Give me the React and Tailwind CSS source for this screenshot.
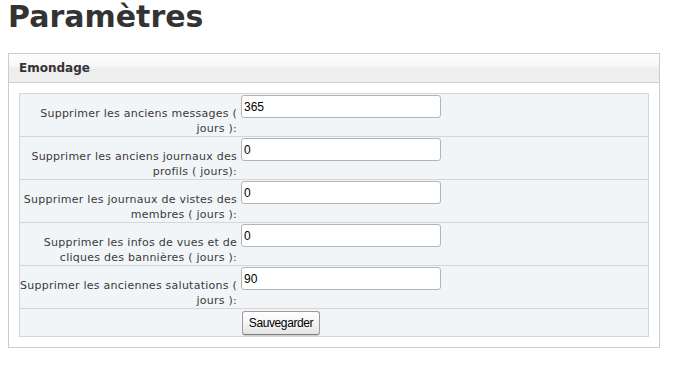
import React from 'react';

// Settings rows: label lines are broken where the original page wraps them
const rows = [
  { lines: ['Supprimer les anciens messages (', 'jours ):'], value: '365' },
  { lines: ['Supprimer les anciens journaux des', 'profils ( jours):'], value: '0' },
  { lines: ['Supprimer les journaux de vistes des', 'membres ( jours ):'], value: '0' },
  { lines: ['Supprimer les infos de vues et de', 'cliques des bannières ( jours ):'], value: '0' },
  { lines: ['Supprimer les anciennes salutations (', 'jours ):'], value: '90' },
];

const SettingRow = ({ lines, value }) => (
  <div className="grid grid-cols-[219px_1fr] border-t border-[#d6d6d6] first:border-t-0">
    <div className="pt-[12px] pr-[2px] text-right text-[11px] leading-[15px] tracking-[0.25px] text-[#3a3a3a] whitespace-nowrap">
      {lines[0]}
      <br />
      {lines[1]}
    </div>
    <div className="pt-[1px] pl-[2px]">
      <input
        type="text"
        defaultValue={value}
        className="block w-[200px] h-[23px] px-[2px] bg-white border border-[#b4b4b4] rounded-[3px] text-[12px] text-black outline-none"
        style={{ fontFamily: '"Liberation Sans", Arial, sans-serif' }}
      />
    </div>
  </div>
);

export default function App() {
  return (
    <div
      className="min-h-[370px] bg-white text-[#333333]"
      style={{ fontFamily: '"DejaVu Sans", Verdana, sans-serif' }}
    >
      <h1 className="pl-[8px] text-[30px] leading-[34px] font-bold text-[#333333]">Paramètres</h1>

      <div className="ml-[8px] mt-[19px] w-[652px] border border-[#cccccc]">
        {/* Panel header */}
        <div className="h-[29px] border-b border-[#cccccc] bg-[linear-gradient(to_bottom,#fdfdfd_0%,#f8f8f8_40%,#ededed_55%,#efefef_100%)] pl-[10px] text-[12px] leading-[28px] font-bold text-[#333333]">
          Emondage
        </div>

        {/* Panel body */}
        <div className="p-[10px]">
          <div className="border border-[#d6d6d6] bg-[#f2f5f8]">
            {rows.map((row, i) => (
              <SettingRow key={i} lines={row.lines} value={row.value} />
            ))}
            <div className="grid grid-cols-[219px_1fr] border-t border-[#d6d6d6]">
              <div />
              <div className="pt-[2px] pb-[1px] pl-[3px]">
                <button
                  type="button"
                  className="block w-[78px] h-[24px] rounded-[3px] border border-[#9a9a9a] border-b-[#7d7d7d] bg-[linear-gradient(to_bottom,#ffffff_0%,#f4f4f4_50%,#e4e4e4_100%)] text-[12px] tracking-[-0.4px] text-black shadow-[0_1px_0_#d0d0d0]"
                  style={{ fontFamily: '"Liberation Sans", Arial, sans-serif' }}
                >
                  Sauvegarder
                </button>
              </div>
            </div>
          </div>
        </div>
      </div>
    </div>
  );
}
